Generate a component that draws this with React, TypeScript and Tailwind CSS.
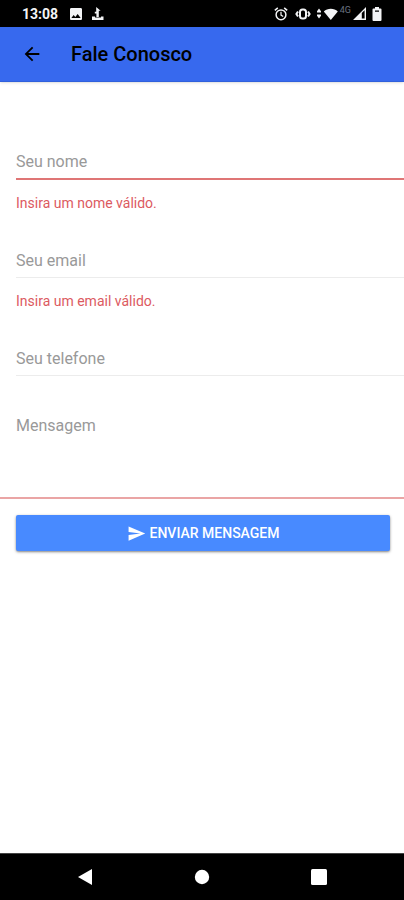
import { MdArrowBack, MdImage, MdSend } from 'react-icons/md';

function StatusBar() {
  return (
    <div className="flex h-[27px] items-center bg-black pl-[22px] pr-5 text-gray-100">
      <span className="text-[14px] leading-5 font-bold">13:08</span>
      <MdImage size={16} className="ml-[10px]" />
      <svg className="ml-2" width="12" height="13" viewBox="0 0 12 13" fill="currentColor">
        <path d="M4.200 0l4.400 3.800H6.800V10H4.400V6.400H2.800V4.800h1.400z" />
        <path d="M0 9.600h3v1h6v-1h2.500V13H0z" />
      </svg>
      <div className="ml-auto flex items-center">
        {/* Alarme */}
        <svg width="14" height="14" viewBox="0 0 14 14" fill="none" stroke="currentColor">
          <circle cx="7" cy="7.800" r="4.900" strokeWidth="1.500" />
          <path d="M.8 3.400L3.800 .9M13.200 3.400L10.200 .9" strokeWidth="1.500" />
          <path d="M7 4.800v3.300l2.200 1.400" strokeWidth="1.200" />
        </svg>
        {/* Vibrar */}
        <svg className="ml-[7px]" width="16" height="12" viewBox="0 0 16 12" fill="none" stroke="currentColor">
          <rect x="5" y="1.500" width="6" height="9" rx="2.500" strokeWidth="2" />
          <path d="M3 3.500L1.400 6 3 8.500M13 3.500L14.600 6 13 8.500" strokeWidth="2" />
        </svg>
        {/* Wi-Fi */}
        <svg className="ml-[6px]" width="21" height="12" viewBox="0 0 21 12" fill="currentColor">
          <path d="M2 .6l2 2.600v1.200H0V3.200zM2 10.400L0 7.800V6.600h4v1.200z" />
          <path d="M6.800 3.400C10.400-.1 17.200-.1 20.800 3.400L13.800 12z" />
        </svg>
        <span className="mb-2 ml-[2px] text-[9px] leading-3 text-gray-500">4G</span>
        <svg className="ml-[2px]" width="13" height="13" viewBox="0 0 13 13" fill="currentColor">
          <path fillRule="evenodd" d="M13 0v13H0zM11.600 3.200L8.800 6v5.600h2.800z" />
        </svg>
        <svg className="ml-[6px] mr-[2px]" width="10" height="14" viewBox="0 0 10 14" fill="currentColor">
          <path fillRule="evenodd" d="M3 0h4v1.600h1.500q1 0 1 1V13q0 1-1 1h-7q-1 0-1-1V2.600q0-1 1-1H3zM3 3.400v1.400h4V3.400z" />
        </svg>
      </div>
    </div>
  );
}

function Field({ id, type, label, error, line }: {
  id: string;
  type: string;
  label: string;
  error?: string;
  line: string;
}) {
  return (
    <div className="pl-4">
      <input
        id={id}
        type={type}
        aria-label={label}
        placeholder={label}
        className={`block w-full bg-transparent py-1 text-[16px] leading-[25px] outline-none placeholder:text-[#999999] ${line}`}
      />
      {error && <p className="mt-[13px] text-[14px] leading-5 text-[#dc5a5f]">{error}</p>}
    </div>
  );
}

export default function App() {
  return (
    <div className="flex min-h-screen flex-col bg-white font-['Roboto',sans-serif]">
      <StatusBar />
      <header className="flex h-[55px] items-center border-b border-[#3060dc] bg-[#3769ee] pl-[21px] text-black shadow-sm">
        <button type="button" aria-label="Voltar">
          <MdArrowBack size={22} />
        </button>
        <h1 className="ml-7 text-[20px] leading-6 font-medium">Fale Conosco</h1>
      </header>

      <form className="flex-1 pt-[63px]">
        <div className="flex flex-col gap-[31px]">
          <Field id="nome" type="text" label="Seu nome" error="Insira um nome válido." line="border-b-2 border-[#df7575]" />
          <Field id="email" type="email" label="Seu email" error="Insira um email válido." line="border-b border-[#ececec]" />
          <Field id="telefone" type="tel" label="Seu telefone" line="border-b border-[#ececec]" />
        </div>
        <div className="mt-10 border-b-2 border-[#eaa5a5] pl-4">
          <textarea
            id="mensagem"
            aria-label="Mensagem"
            placeholder="Mensagem"
            className="block h-[81px] w-full resize-none bg-transparent text-[16px] leading-5 outline-none placeholder:text-[#999999]"
          />
        </div>
        <div className="pt-4 pr-[14px] pl-4">
          <button
            type="submit"
            className="flex h-9 w-full items-center justify-center gap-1 rounded-[2px] bg-[#488aff] text-[14px] font-medium text-white shadow-sm shadow-black/40"
          >
            <MdSend size={19} />
            ENVIAR MENSAGEM
          </button>
        </div>
      </form>

      <nav className="flex h-[47px] items-center justify-between border-t border-[#444444] bg-black px-[77px] text-white">
        <button type="button" aria-label="Voltar">
          <svg width="16" height="18" viewBox="0 0 16 18" fill="currentColor">
            <path d="M15 1v16L1 9z" />
          </svg>
        </button>
        <button type="button" aria-label="Início">
          <svg width="16" height="16" viewBox="0 0 16 16" fill="currentColor">
            <circle cx="8" cy="8" r="7.200" />
          </svg>
        </button>
        <button type="button" aria-label="Recentes">
          <svg width="16" height="16" viewBox="0 0 16 16" fill="currentColor">
            <rect width="16" height="16" rx="1.500" />
          </svg>
        </button>
      </nav>
    </div>
  );
}
